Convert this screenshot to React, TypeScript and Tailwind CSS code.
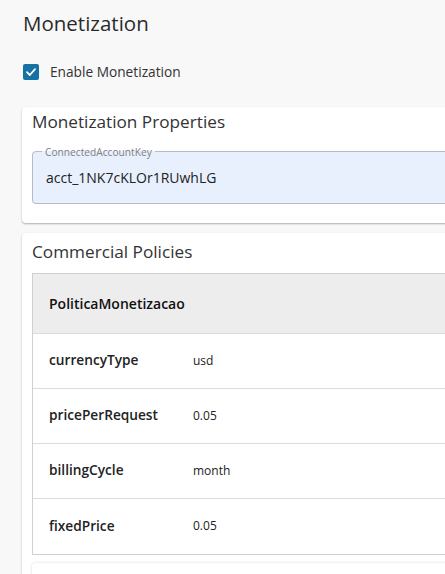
import React from "react";

const rows = [
  { k: "currencyType", v: "usd" },
  { k: "pricePerRequest", v: "0.05" },
  { k: "billingCycle", v: "month" },
  { k: "fixedPrice", v: "0.05" },
];

export default function App() {
  return (
    <div className="w-[445px] h-[574px] overflow-hidden bg-[#f8f8f8] text-[#212121]" style={{ fontFamily: '"Open Sans", sans-serif' }}>
      <div className="w-[640px] pl-[22px] pt-[8px]">
        <h1 className="text-[20.5px] leading-[30px] text-[#2b2b2b] pl-[1px]">Monetization</h1>
        <label className="flex items-center gap-[11px] mt-[24px] pl-[1px]">
          <span className="w-[16px] h-[16px] rounded-[2px] bg-[#1672a3] flex items-center justify-center">
            <svg width="12" height="12" viewBox="0 0 12 12" fill="none">
              <path d="M2 6.2 L4.8 9 L10 3.2" stroke="white" strokeWidth="1.8" strokeLinecap="round" strokeLinejoin="round" />
            </svg>
          </span>
          <span className="text-[13.7px] text-[#333]">Enable Monetization</span>
        </label>

        <div className="mt-[24px] bg-white rounded-[4px] shadow-[0_1px_2px_rgba(0,0,0,0.3)] pl-[10px] pt-[3px] pb-[19px]">
          <div className="text-[17.2px] leading-[24px] text-[#333]">Monetization Properties</div>
          <fieldset className="mt-[13px] h-[57px] border border-[#b7bcc4] rounded-[4px] bg-[#e8f0fe] px-[13px] pt-0">
            <legend className="text-[10.2px] leading-[10px] text-[#808080] px-[3px] ml-[-4px]">ConnectedAccountKey</legend>
            <div className="text-[14px] text-[#222] mt-[10px]">acct_1NK7cKLOr1RUwhLG</div>
          </fieldset>
        </div>

        <div className="mt-[10px] bg-white rounded-[4px] shadow-[0_1px_2px_rgba(0,0,0,0.3)] pl-[10px] pt-[7px] pb-[20px]">
          <div className="text-[17.2px] leading-[24px] text-[#333]">Commercial Policies</div>
          <div className="mt-[9px] border border-[#d0d0d0] border-r-0">
            <div className="h-[60px] bg-[#ededed] flex items-center pl-[16px] text-[14px] font-semibold text-[#111] border-b border-[#dcdcdc]">
              PoliticaMonetizacao
            </div>
            {rows.map((r, i) => (
              <div key={r.k} className={`h-[55px] flex items-center pl-[16px] ${i < rows.length - 1 ? "border-b border-[#dcdcdc]" : ""}`}>
                <span className="w-[144px] text-[13.7px] font-semibold text-[#222]">{r.k}</span>
                <span className="text-[12px] text-[#222]">{r.v}</span>
              </div>
            ))}
          </div>
          <div className="mt-[8px] h-[40px] bg-white rounded-[4px] shadow-[0_0_3px_rgba(0,0,0,0.15)]"></div>
        </div>
      </div>
    </div>
  );
}
